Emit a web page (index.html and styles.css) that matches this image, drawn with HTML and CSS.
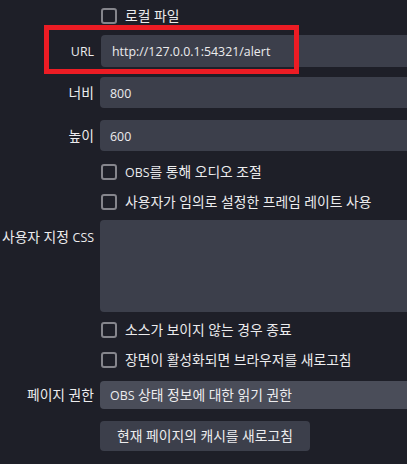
FILE: index.html
```html
<!DOCTYPE html>
<html lang="ko">
<head>
<meta charset="utf-8">
<link rel="stylesheet" href="styles.css">
</head>
<body>
<div class="panel">
  <div class="row cb-row r-local">
    <span class="box"></span><span class="cb-label">로컬 파일</span>
  </div>
  <div class="row field-row r-url">
    <label class="lbl"><span class="en">URL</span></label>
    <div class="input tall"><span class="en">http://127.0.0.1:54321/alert</span></div>
    <div class="highlight"></div>
  </div>
  <div class="row field-row r-w">
    <label class="lbl">너비</label>
    <div class="input"><span class="en">800</span></div>
  </div>
  <div class="row field-row r-h">
    <label class="lbl">높이</label>
    <div class="input"><span class="en">600</span></div>
  </div>
  <div class="row cb-row r-obs">
    <span class="box"></span><span class="cb-label"><span class="en">OBS</span>를 통해 오디오 조절</span>
  </div>
  <div class="row cb-row r-fps">
    <span class="box"></span><span class="cb-label">사용자가 임의로 설정한 프레임 레이트 사용</span>
  </div>
  <div class="row css-row r-css">
    <label class="lbl lbl-top">사용자 지정 <span class="en">CSS</span></label>
    <div class="textarea"></div>
  </div>
  <div class="row cb-row r-shut">
    <span class="box"></span><span class="cb-label">소스가 보이지 않는 경우 종료</span>
  </div>
  <div class="row cb-row r-refresh">
    <span class="box"></span><span class="cb-label">장면이 활성화되면 브라우저를 새로고침</span>
  </div>
  <div class="row field-row r-perm">
    <label class="lbl">페이지 권한</label>
    <div class="select"><span class="en">OBS</span> 상태 정보에 대한 읽기 권한</div>
  </div>
  <div class="row btn-row r-btn">
    <div class="button">현재 페이지의 캐시를 새로고침</div>
  </div>
</div>
</body>
</html>
```
FILE: styles.css
```css
html, body {
  margin: 0;
  padding: 0;
  background: #1e1f28;
  overflow: hidden;
}
body {
  width: 407px;
  height: 464px;
  font-family: "Open Sans", "Noto Sans CJK KR", sans-serif;
  font-size: 13.8px;
  color: #ececee;
}
.en {
  font-size: 12.4px;
}
.panel {
  width: 407px;
  display: flex;
  flex-direction: column;
  padding-top: 7px;
}
.row {
  display: flex;
  align-items: center;
  position: relative;
}
.cb-row {
  height: 16px;
  padding-left: 101px;
  gap: 8px;
}
.box {
  width: 12px;
  height: 12px;
  border: 2px solid #85858c;
  border-radius: 3px;
  flex: none;
}
.cb-label {
  line-height: 16px;
  white-space: nowrap;
}
.lbl {
  width: 94px;
  text-align: right;
  flex: none;
  margin-right: 6px;
  line-height: 18px;
  white-space: nowrap;
}
.lbl-top {
  align-self: flex-start;
  margin-top: 8px;
}
.input, .select, .textarea {
  flex: 1;
  background: #3c3f4b;
  border-radius: 4px 0 0 4px;
  box-sizing: border-box;
  white-space: nowrap;
  overflow: hidden;
}
.input {
  height: 31px;
  line-height: 31px;
  padding-left: 10px;
}
.input.tall {
  height: 32px;
  line-height: 32px;
  padding-left: 11px;
  margin-left: 1px;
}
.select {
  height: 28px;
  line-height: 28px;
  padding-left: 10px;
  background: #4a4d59;
}
.textarea {
  height: 92px;
}
.btn-row {
  padding-left: 100px;
}
.button {
  width: 210px;
  height: 30px;
  line-height: 30px;
  text-align: center;
  background: #3c3f4b;
  border-radius: 4px;
  white-space: nowrap;
}
.highlight {
  position: absolute;
  left: 44px;
  top: -10px;
  width: 245px;
  height: 39px;
  border: 5px solid #ec1c24;
}
.r-local { margin-top: 1px; }
.r-url { margin-top: 11px; }
.r-w { margin-top: 10px; }
.r-h { margin-top: 12px; }
.r-obs { margin-top: 13px; }
.r-fps { margin-top: 14px; }
.r-css { margin-top: 10px; }
.r-shut { margin-top: 10px; }
.r-refresh { margin-top: 14px; }
.r-perm { margin-top: 13px; }
.r-btn { margin-top: 12px; }
```
